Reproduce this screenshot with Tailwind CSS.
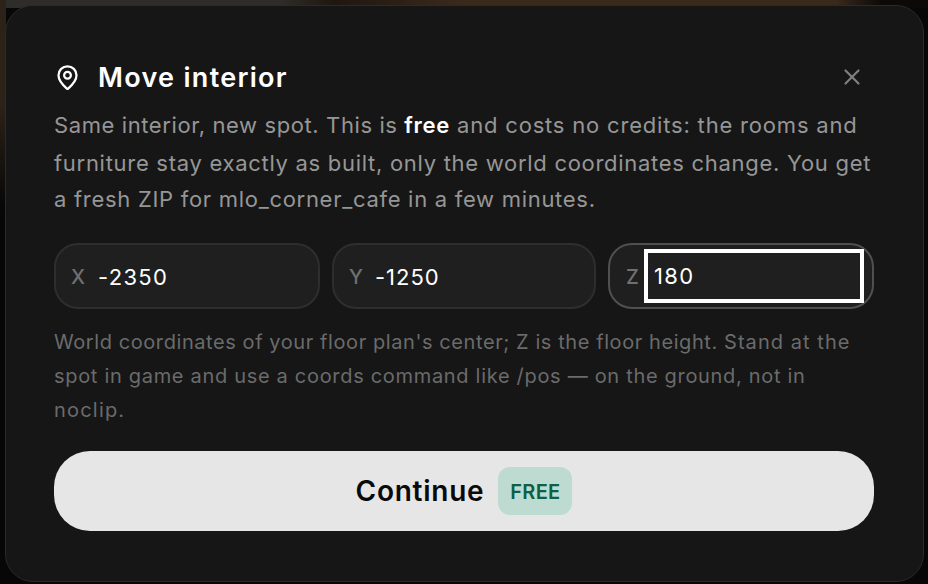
<!DOCTYPE html>
<html lang="en">
<head>
<meta charset="utf-8">
<script src="https://cdn.jsdelivr.net/npm/@tailwindcss/browser@4"></script>
</head>
<body class="w-[928px] h-[584px] overflow-hidden bg-[#070707] font-['Inter',sans-serif] relative">
<div class="absolute inset-x-0 top-0 h-[8px] bg-[linear-gradient(to_right,#2f2d2a_0%,#2f2d2a_30%,#1f170f_36%,#3a2a1c_50%,#3a2a1c_90%,#0c0a08_95%)]"></div>
<div class="absolute left-0 top-0 w-[6px] h-[210px] bg-gradient-to-b from-[#2c2218] via-[#2c2218] to-[#070707]"></div>
<div class="relative ml-[5px] mt-[5px] w-[919px] h-[577px] rounded-[28px] border border-[#2a2a2a] bg-[#161616] px-[48px] pt-[54px]">
  <div class="flex items-center justify-between h-[36px]">
    <div class="flex items-center gap-[17px]">
      <svg class="w-[27px] h-[27px] text-white -translate-y-[1px]" viewBox="0 0 24 24" fill="none" stroke="currentColor" stroke-width="2" stroke-linecap="round" stroke-linejoin="round"><path d="M20 10c0 4.993-5.539 10.193-7.399 11.799a1 1 0 0 1-1.202 0C9.539 20.193 4 14.993 4 10a8 8 0 0 1 16 0"/><circle cx="12" cy="10" r="3"/></svg>
      <h2 class="text-[27px] font-semibold text-white tracking-[1.3px] leading-[36px]">Move interior</h2>
    </div>
    <button class="mr-[10px] -translate-y-[1px]"><svg class="w-[26px] h-[26px] text-[#808080] block" viewBox="0 0 24 24" fill="none" stroke="currentColor" stroke-width="2" stroke-linecap="round"><path d="M18 6 6 18"/><path d="m6 6 12 12"/></svg></button>
  </div>
  <div class="mt-[11px] text-[22px] tracking-[0.71px] text-[#969696] whitespace-nowrap">
    <p class="h-[38px] leading-[37px]"><span class="tracking-[0.6px]">Same interior, new spot. This is </span><strong class="font-semibold text-white">free</strong><span class="tracking-[0.81px]"> and costs no credits: the rooms and</span></p>
    <p class="h-[36px] leading-[37px]">furniture stay exactly as built, only the world coordinates change. You get</p>
    <p class="h-[37px] leading-[37px]">a fresh ZIP for mlo_corner_cafe in a few minutes.</p>
  </div>
  <div class="mt-[25px] grid grid-cols-[266px_264px_266px] gap-[12px] w-[820px]">
    <label class="flex items-center h-[66px] rounded-[24px] border-2 border-[#2e2e2e] bg-[#1f1f1f] pl-[15px]">
      <span class="w-[27px] translate-y-[1px] text-[20px] font-medium text-[#707070]">X</span><span class="translate-y-[1px] text-[22px] text-white tracking-[1.3px]">-2350</span>
    </label>
    <label class="flex items-center h-[66px] rounded-[24px] border-2 border-[#2e2e2e] bg-[#1f1f1f] pl-[15px]">
      <span class="w-[26px] translate-y-[1px] text-[20px] font-medium text-[#707070]">Y</span><span class="translate-y-[1px] text-[22px] text-white tracking-[1px]">-1250</span>
    </label>
    <label class="flex items-center h-[66px] rounded-[24px] border-2 border-[#505050] bg-[#1f1f1f] pl-[16px]">
      <span class="w-[18px] translate-y-[1px] text-[20px] font-medium text-[#707070]">Z</span><span class="flex items-center h-[54px] w-[220px] border-4 border-white pl-[6px] text-[22px] text-white tracking-[1.3px]">180</span>
    </label>
  </div>
  <div class="mt-[16px] text-[20px] leading-[34px] tracking-[0.69px] text-[#6b6b6b] whitespace-nowrap">
    <p><span class="tracking-[0.58px]">World coordinates of your floor plan's center; Z is the floor height. </span><span class="tracking-[1.05px]">Stand at the</span></p>
    <p>spot in game and use a coords command like /pos — on the ground, not in</p>
    <p class="tracking-[1.2px]">noclip.</p>
  </div>
  <button class="mt-[24px] flex items-center justify-center gap-[14px] w-[820px] h-[80px] rounded-[36px] bg-[#e6e6e6]">
    <span class="text-[28px] font-semibold text-[#0a0a0a] tracking-[0.75px]">Continue</span>
    <span class="flex items-center justify-center w-[74px] h-[48px] rounded-[12px] bg-[#bddbd0] pt-[1px] text-[20px] font-semibold text-[#0b6045] tracking-[0.3px]">FREE</span>
  </button>
</div>
</body>
</html>
